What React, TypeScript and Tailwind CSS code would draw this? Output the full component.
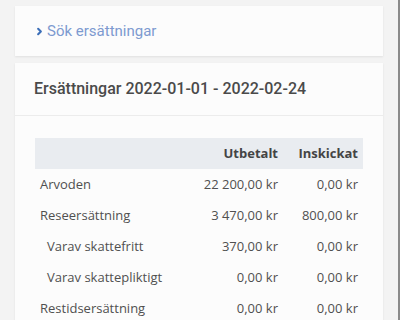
import { ChevronRight } from 'lucide-react';

interface Row {
  label: string;
  paid: string;
  sent: string;
  sub?: boolean;
}

const rows: Row[] = [
  { label: 'Arvoden', paid: '22 200,00 kr', sent: '0,00 kr' },
  { label: 'Reseersättning', paid: '3 470,00 kr', sent: '800,00 kr' },
  { label: 'Varav skattefritt', paid: '370,00 kr', sent: '0,00 kr', sub: true },
  { label: 'Varav skattepliktigt', paid: '0,00 kr', sent: '0,00 kr', sub: true },
  { label: 'Restidsersättning', paid: '0,00 kr', sent: '0,00 kr' },
];

export default function App() {
  return (
    <div className="h-[320px] w-[400px] overflow-hidden bg-[#f3f3f3] pl-[15px] pr-[15px] border-r-2 border-[#8a8a8a] font-['Roboto',sans-serif]">
      <div className="mt-[6px] h-[50px] bg-[#fcfcfc] shadow-[0_1px_2px_rgba(0,0,0,0.08)] flex items-center pl-[19px]">
        <ChevronRight className="w-[11px] h-[11px] text-[#3d6fb8]" strokeWidth={4.5} />
        <span className="ml-[2px] text-[15px] text-[#7d9ad0]">Sök ersättningar</span>
      </div>

      <div className="mt-[7px] bg-[#fcfcfc] shadow-[0_1px_2px_rgba(0,0,0,0.08)]">
        <div className="h-[53px] flex items-center pl-[19px] border-b border-[#ececec]">
          <span className="text-[16px] font-medium text-[#4a4a4a]">Ersättningar 2022-01-01 - 2022-02-24</span>
        </div>

        <div className="px-[20px] pt-[22px] pb-[20px] font-['Open_Sans',sans-serif] text-[13px] text-[#505050]">
          <div className="grid grid-cols-[1fr_82px_80px] h-[31px] items-center bg-[#e9ecf0] pr-[5px] font-bold text-[#444]">
            <span />
            <span className="text-right">Utbetalt</span>
            <span className="text-right">Inskickat</span>
          </div>
          {rows.map((r) => (
            <div key={r.label} className="grid grid-cols-[1fr_82px_80px] h-[31px] items-center pr-[5px]">
              <span className={r.sub ? 'pl-[12px]' : 'pl-[5px]'}>{r.label}</span>
              <span className="text-right">{r.paid}</span>
              <span className="text-right">{r.sent}</span>
            </div>
          ))}
        </div>
      </div>
    </div>
  );
}
